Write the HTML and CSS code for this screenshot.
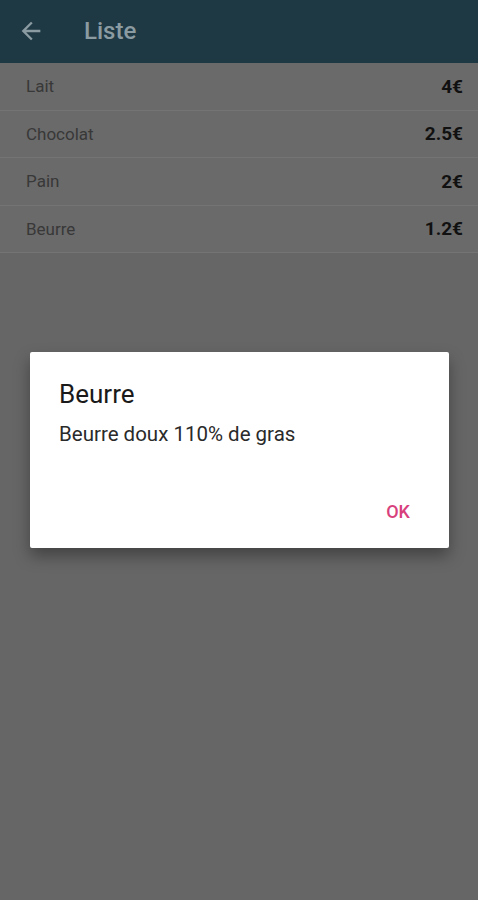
FILE: index.html
```html
<!doctype html>
<html lang="fr">
  <head>
    <meta charset="utf-8" />
    <title>Liste</title>
    <link rel="stylesheet" href="styles.css">
  </head>
  <body>
    <!-- App bar -->
    <div class="appBar">
      <svg class="backIcon" width="28" height="28" viewBox="0 0 24 24">
        <path d="M20 11H7.83l5.59-5.59L12 4l-8 8 8 8 1.41-1.41L7.83 13H20v-2z" fill="currentColor" />
      </svg>
      <div class="appTitle">Liste</div>
    </div>

    <div class="list">
      <div class="row"><span class="name">Lait</span><span class="price">4€</span></div>
      <div class="row"><span class="name">Chocolat</span><span class="price">2.5€</span></div>
      <div class="row"><span class="name">Pain</span><span class="price">2€</span></div>
      <div class="row"><span class="name">Beurre</span><span class="price">1.2€</span></div>
    </div>

    <!-- Dialog over dimmed content -->
    <div class="overlay">
      <div class="dialog">
        <div class="dialogTitle">Beurre</div>
        <div class="dialogText">Beurre doux 110% de gras</div>
        <div class="dialogActions">
          <button class="okBtn">OK</button>
        </div>
      </div>
    </div>
  </body>
</html>
```

FILE: styles.css
```css
* {
  box-sizing: border-box;
}
body {
  margin: 0;
  height: 900px;
  background: #666;
  font-family: Roboto, "Noto Sans", sans-serif;
  position: relative;
  overflow: hidden;
}
.appBar {
  height: 63px;
  background: #1f3944;
  display: flex;
  align-items: center;
  padding: 0 0 0 17px;
  color: #8b9ba2;
}
.backIcon {
  display: block;
  margin-top: -2px;
}
.appTitle {
  margin-left: 39px;
  font-size: 24px;
  font-weight: 500;
  margin-top: -1px;
}
.list {
  background: #6a6a6a;
}
.row {
  height: 47.5px;
  display: flex;
  align-items: center;
  justify-content: space-between;
  padding: 0 15px 0 26px;
  border-bottom: 1px solid #747474;
}
.name {
  font-size: 17px;
  color: #383838;
}
.price {
  font-size: 19px;
  font-weight: bold;
  color: #111;
}
/* Dialog overlay */
.overlay {
  position: absolute;
  top: 0;
  left: 0;
  width: 100%;
  height: 100%;
  padding-top: 352px;
  padding-left: 30px;
}
.dialog {
  width: 419px;
  height: 196px;
  background: #fff;
  border-radius: 2px;
  box-shadow: 0 8px 16px rgba(0, 0, 0, 0.35);
  padding: 27px 24px 0 29px;
  display: flex;
  flex-direction: column;
}
.dialogTitle {
  font-size: 26px;
  color: #1a1a1a;
}
.dialogText {
  margin-top: 13px;
  font-size: 20.5px;
  color: #2a2a2a;
}
.dialogActions {
  margin-top: auto;
  display: flex;
  justify-content: flex-end;
  padding-bottom: 26px;
}
.okBtn {
  background: none;
  border: none;
  padding: 0 15px 0 0;
  font-family: inherit;
  font-size: 18px;
  font-weight: 500;
  color: #d8407c;
}
```
